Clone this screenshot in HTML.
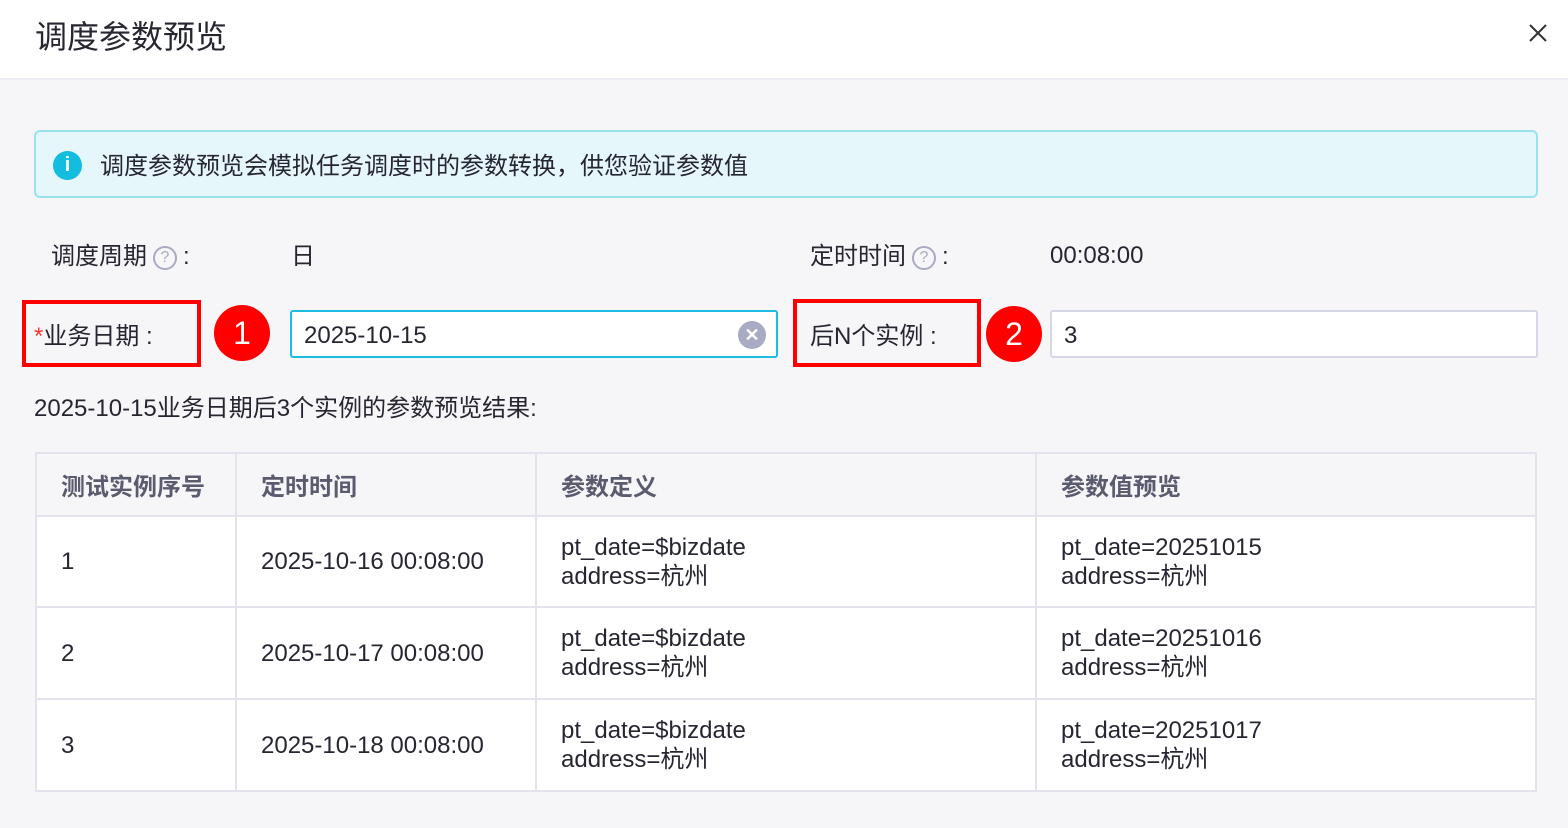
<!DOCTYPE html>
<html><head><meta charset="utf-8"><style>
*{margin:0;padding:0;box-sizing:border-box}
body{width:1568px;height:828px;background:#f6f6f9;font-family:"Liberation Sans","Noto Sans CJK SC",sans-serif;color:#262631;position:relative;overflow:hidden}
.a{position:absolute;white-space:nowrap}
.hdr{position:absolute;left:0;top:0;width:1568px;height:80px;background:#fff;border-bottom:2px solid #ececf2}
.q{display:inline-block;width:24px;height:24px;border:2px solid #a9aac4;border-radius:50%;color:#a9aac4;font-size:16px;line-height:20px;text-align:center;vertical-align:middle;margin:0 6px}
.red{position:absolute;border:4px solid #f00}
.num{position:absolute;width:56px;height:56px;border-radius:50%;background:#f00;color:#fff;font-size:32px;text-align:center;line-height:56px}
table{position:absolute;left:35px;top:452px;width:1502px;border-collapse:collapse;font-size:24px}
td,th{border:2px solid #e3e3ee;text-align:left;padding:0 0 0 24px;font-weight:normal}
th{height:63px;color:#5b5b70;font-weight:bold;background:#f6f6f9}
td{background:#fff;line-height:29px}
</style></head><body>
<div class="hdr"></div>
<div class="a" style="left:35px;top:12px;font-size:32px;color:#262631">调度参数预览</div>
<svg class="a" style="left:1529px;top:24px" width="18" height="18" viewBox="0 0 18 18"><path d="M1 1L17 17M17 1L1 17" stroke="#333" stroke-width="2"/></svg>
<div class="a" style="left:34px;top:130px;width:1504px;height:68px;background:#e5f7fb;border:2px solid #99e3ef;border-radius:6px"></div>
<div class="a" style="left:53px;top:151px;width:29px;height:29px;border-radius:50%;background:#12bde0;color:#fff;text-align:center;font-size:20px;line-height:29px;font-weight:bold">i</div>
<div class="a" style="left:100px;top:146px;font-size:24px">调度参数预览会模拟任务调度时的参数转换，供您验证参数值</div>
<div class="a" style="left:51px;top:236px;font-size:24px">调度周期<span class="q">?</span>:</div>
<div class="a" style="left:291px;top:236px;font-size:24px">日</div>
<div class="a" style="left:810px;top:236px;font-size:24px">定时时间<span class="q">?</span>:</div>
<div class="a" style="left:1050px;top:242px;font-size:24px">00:08:00</div>
<div class="red" style="left:22px;top:300px;width:179px;height:67px"></div>
<div class="a" style="left:34px;top:316px;font-size:24px"><span style="color:#f33">*</span>业务日期 :</div>
<div class="num" style="left:214px;top:305px">1</div>
<div class="a" style="left:290px;top:310px;width:488px;height:48px;background:#fff;border:2px solid #1cbde0;border-radius:3px"></div>
<div class="a" style="left:304px;top:322px;font-size:24px">2025-10-15</div>
<div class="a" style="left:738px;top:321px;width:28px;height:28px;border-radius:50%;background:#a9aac4;color:#fff;text-align:center;line-height:28px;font-size:18px;font-weight:bold">✕</div>
<div class="red" style="left:793px;top:299px;width:188px;height:68px"></div>
<div class="a" style="left:810px;top:316px;font-size:24px">后N个实例 :</div>
<div class="num" style="left:986px;top:306px">2</div>
<div class="a" style="left:1050px;top:310px;width:488px;height:48px;background:#fff;border:2px solid #d6d7e6;border-radius:3px"></div>
<div class="a" style="left:1064px;top:322px;font-size:24px">3</div>
<div class="a" style="left:34px;top:388px;font-size:24px">2025-10-15业务日期后3个实例的参数预览结果:</div>
<table>
<tr><th style="width:200px">测试实例序号</th><th style="width:300px">定时时间</th><th style="width:500px">参数定义</th><th>参数值预览</th></tr>
<tr style="height:91px"><td>1</td><td>2025-10-16 00:08:00</td><td>pt_date=$bizdate<br>address=杭州</td><td>pt_date=20251015<br>address=杭州</td></tr>
<tr style="height:92px"><td>2</td><td>2025-10-17 00:08:00</td><td>pt_date=$bizdate<br>address=杭州</td><td>pt_date=20251016<br>address=杭州</td></tr>
<tr style="height:92px"><td>3</td><td>2025-10-18 00:08:00</td><td>pt_date=$bizdate<br>address=杭州</td><td>pt_date=20251017<br>address=杭州</td></tr>
</table>
</body></html>
